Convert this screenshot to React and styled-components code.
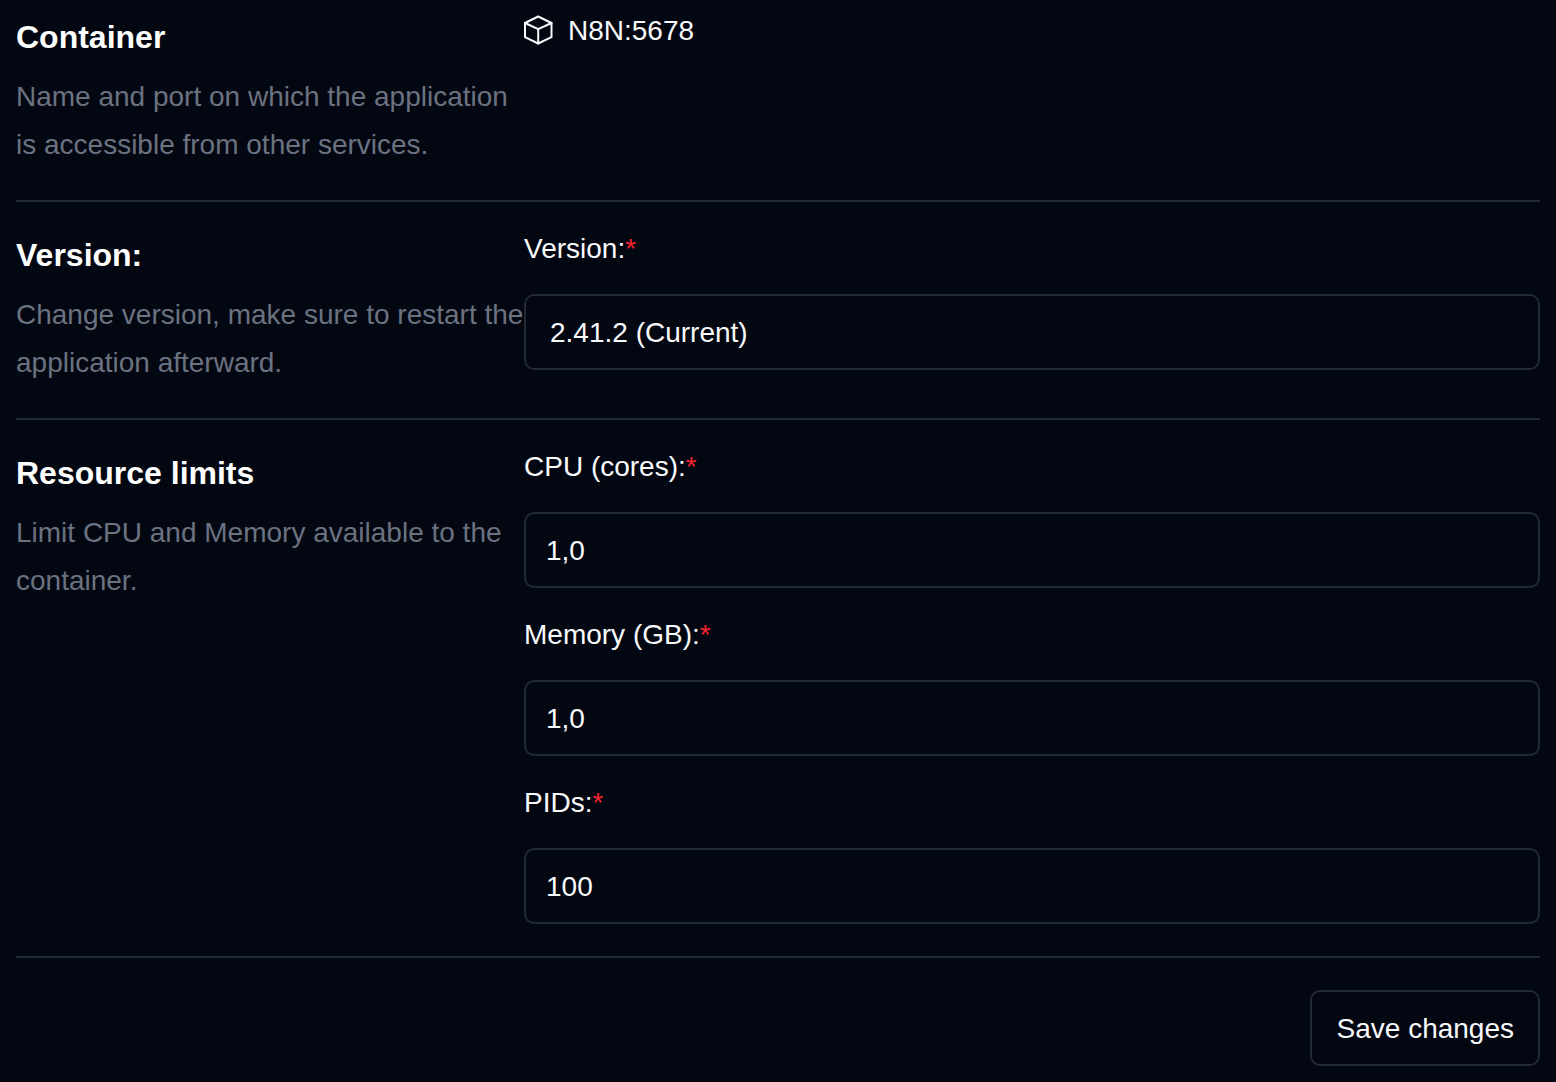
import React from "react";
import styled, { createGlobalStyle } from "styled-components";

const GlobalStyle = createGlobalStyle`
  html, body {
    margin: 0;
    background: #030712;
    color: #f9fafb;
    font-family: "Liberation Sans", Arial, sans-serif;
  }
  * { box-sizing: border-box; }
`;

const Page = styled.div`
  width: 1556px;
  height: 1082px;
  overflow: hidden;
  padding: 10px 16px 0;
`;

const Section = styled.section`
  display: grid;
  grid-template-columns: 508px 1016px;
  padding: 26px 0 32px;
  border-bottom: 2px solid #1f2937;

  &:first-child {
    padding-top: 0;
  }
`;

const Intro = styled.div`
  padding-top: 7px;
`;

const Title = styled.h2`
  margin: 0 0 16px;
  font-size: 32px;
  line-height: 40px;
  font-weight: 700;
  color: #fff;
`;

const Hint = styled.p`
  margin: 0 0 -1px;
  font-size: 28px;
  line-height: 48px;
  color: #6b7280;
`;

const Fields = styled.div`
  display: flex;
  flex-direction: column;
  gap: 26px;
`;

const Field = styled.div`
  display: flex;
  flex-direction: column;
  gap: 24px;
`;

const Label = styled.label`
  font-size: 28px;
  line-height: 42px;
`;

const Required = styled.span`
  color: #f5222d;
`;

const Input = styled.input`
  width: 100%;
  height: 76px;
  padding: 2px 20px 0;
  background: transparent;
  border: 2px solid #1f2937;
  border-radius: 10px;
  color: #f9fafb;
  font: 28px "Liberation Sans", Arial, sans-serif;
  outline: none;
`;

const SelectBox = styled.div`
  display: flex;
  align-items: center;
  height: 76px;
  padding: 2px 24px 0;
  border: 2px solid #1f2937;
  border-radius: 10px;
  font-size: 28px;
`;

const ContainerName = styled.div`
  display: flex;
  align-items: center;
  gap: 14px;
  height: 42px;
  font-size: 28px;

  svg {
    margin-top: -2px;
  }
`;

const Footer = styled.div`
  display: flex;
  justify-content: flex-end;
  padding-top: 32px;
`;

const SaveButton = styled.button`
  height: 76px;
  padding: 2px 24px 0 25px;
  background: transparent;
  border: 2px solid #1f2937;
  border-radius: 10px;
  color: #f9fafb;
  font: 28px "Liberation Sans", Arial, sans-serif;
`;

const CubeIcon = () => (
  <svg width="30" height="30" viewBox="0 0 30 30" fill="none" stroke="currentColor" strokeWidth="2" strokeLinejoin="round" strokeLinecap="round">
    <path d="M14.2 1.5 27.5 8v14.2l-13.3 6.3L1 22.2V8z" />
    <path d="M1 8l13.2 6.2L27.5 8M14.2 14.2v14.3" />
  </svg>
);

const limits = [
  { label: "CPU (cores):", value: "1,0" },
  { label: "Memory (GB):", value: "1,0" },
  { label: "PIDs:", value: "100" },
];

export default function App() {
  return (
    <Page>
      <GlobalStyle />
      <Section>
        <Intro>
          <Title>Container</Title>
          <Hint>Name and port on which the application is accessible from other services.</Hint>
        </Intro>
        <ContainerName>
          <CubeIcon />
          N8N:5678
        </ContainerName>
      </Section>
      <Section>
        <Intro>
          <Title>Version:</Title>
          <Hint>Change version, make sure to restart the application afterward.</Hint>
        </Intro>
        <Fields>
          <Field>
            <Label>
              Version:<Required>*</Required>
            </Label>
            <SelectBox>2.41.2 (Current)</SelectBox>
          </Field>
        </Fields>
      </Section>
      <Section>
        <Intro>
          <Title>Resource limits</Title>
          <Hint>Limit CPU and Memory available to the container.</Hint>
        </Intro>
        <Fields>
          {limits.map((item) => (
            <Field key={item.label}>
              <Label>
                {item.label}
                <Required>*</Required>
              </Label>
              <Input defaultValue={item.value} readOnly />
            </Field>
          ))}
        </Fields>
      </Section>
      <Footer>
        <SaveButton>Save changes</SaveButton>
      </Footer>
    </Page>
  );
}
